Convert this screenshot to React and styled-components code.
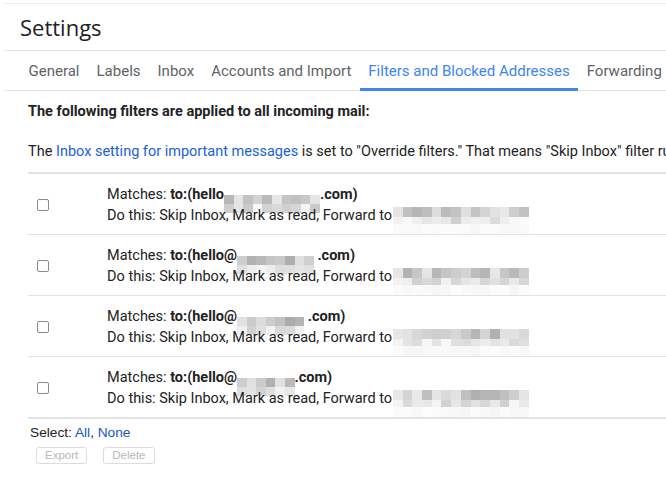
import React from 'react'
import styled, { createGlobalStyle } from 'styled-components'

const GlobalStyle = createGlobalStyle`
	html, body {
		margin: 0;
		padding: 0;
		background: #fff;
		overflow: hidden;
	}
	body {
		font-family: Roboto, 'Liberation Sans', Arial, sans-serif;
		color: #222;
	}
`

const tabs = ['General', 'Labels', 'Inbox', 'Accounts and Import', 'Filters and Blocked Addresses', 'Forwarding']

// blurred bits of the addresses, cols / shades picked to look like the screenshot
const filters = [
	{ at: false, matchCols: 10, matchSeed: 3, fwdSeed: 11 },
	{ at: true, matchCols: 8, matchSeed: 7, fwdSeed: 17, gap: true },
	{ at: true, matchCols: 7, matchSeed: 5, fwdSeed: 23, gap: true },
	{ at: true, matchCols: 6, matchSeed: 13, fwdSeed: 29 },
]

// tiny seeded random so the mosaic stays the same on every render
function shades(seed, count, min, max) {
	let s = seed * 9301 + 49297
	const out = []
	for (let i = 0; i < count; i++) {
		s = (s * 9301 + 49297) % 233280
		const v = Math.round(min + (s / 233280) * (max - min))
		out.push(`rgb(${v},${v},${v})`)
	}
	return out
}

function Mosaic({ seed, cols, rows, cell = 10, min = 190, max = 245, className }) {
	return (
		<MosaicGrid className={className} $cols={cols} $cell={cell}>
			{rows.map((r, ri) =>
				shades(seed + ri * 31, cols, r.min ?? min, r.max ?? max).map((c, i) => (
					<MosaicCell key={ri + '-' + i} $h={r.h} style={{ background: c }} />
				))
			)}
		</MosaicGrid>
	)
}

export default function App() {
	return (
		<Page>
			<GlobalStyle />
			<Header>Settings</Header>

			<TabBar>
				{tabs.map(t => (
					<Tab key={t} $active={t === 'Filters and Blocked Addresses'}>{t}</Tab>
				))}
			</TabBar>

			<Content>
				<Heading>The following filters are applied to all incoming mail:</Heading>
				<Note>
					The <Link>Inbox setting for important messages</Link> is set to "Override filters." That means "Skip Inbox" filter rules will not apply.
				</Note>

				<FilterTable>
					{filters.map((f, i) => (
						<FilterRow key={i} $last={i === filters.length - 1}>
							<CheckCell>
								<Check />
							</CheckCell>
							<Details>
								<Line>
									Matches: <b>to:(hello{f.at ? '@' : ''}</b>
									<MatchMosaic
										seed={f.matchSeed}
										cols={f.matchCols}
										cell={9.6}
										rows={[{ h: 9, min: 170, max: 232 }, { h: 9, min: 200, max: 248 }]}
									/>
									<b>{f.gap ? ' ' : ''}.com)</b>
								</Line>
								<Line>
									Do this: Skip Inbox, Mark as read, Forward to
									<FwdMosaic
										seed={f.fwdSeed}
										cols={14}
										cell={9.7}
										rows={[{ h: 10, min: 175, max: 235 }, { h: 7, min: 205, max: 250 }, { h: 10, min: 246, max: 252 }]}
									/>
								</Line>
							</Details>
						</FilterRow>
					))}
				</FilterTable>

				<Select>
					Select: <SelLink>All</SelLink>, <SelLink>None</SelLink>
				</Select>
				<Buttons>
					<Button disabled>Export</Button>
					<Button disabled>Delete</Button>
				</Buttons>
			</Content>
		</Page>
	)
}

const Page = styled.div`
	margin: 3px 0 0 4px;
	border-top: 1px solid #ececec;
	width: 900px;
`

const Header = styled.div`
	height: 46px;
	display: flex;
	align-items: center;
	padding-left: 16px;
	font-family: 'Open Sans', Roboto, sans-serif;
	font-size: 22px;
	color: #202124;
	border-bottom: 1px solid #e5e5e5;
`

const TabBar = styled.div`
	display: flex;
	height: 39px;
	padding-left: 16px;
	border-bottom: 1px solid #e5e5e5;
	white-space: nowrap;
`

const Tab = styled.div`
	display: flex;
	align-items: center;
	padding: 2px 8.5px 0;
	font-size: 15px;
	color: ${p => (p.$active ? '#3d85f0' : '#5f6368')};
	border-bottom: 3px solid ${p => (p.$active ? '#4285f4' : 'transparent')};
	margin-bottom: -1px;
`

const Content = styled.div`
	padding-left: 24px;
`

const Heading = styled.div`
	margin-top: 13px;
	font-size: 14.5px;
	font-weight: bold;
	line-height: 16px;
	color: #222;
`

const Note = styled.div`
	margin-top: 24px;
	font-size: 14.5px;
	line-height: 16px;
	white-space: nowrap;
	color: #222;
`

const Link = styled.span`
	color: #1a5fd6;
`

const FilterTable = styled.div`
	margin-top: 12px;
	border-top: 2px solid #e3e3e3;
`

const FilterRow = styled.div`
	display: flex;
	align-items: center;
	height: 60px;
	border-bottom: ${p => (p.$last ? '2px' : '1px')} solid #e3e3e3;
`

const CheckCell = styled.div`
	width: 79px;
	display: flex;
	padding-left: 9px;
	box-sizing: border-box;
	padding-top: 2px;
`

const Check = styled.span`
	width: 10px;
	height: 10px;
	border: 1px solid #8a8a8a;
	border-radius: 2px;
	background: #fff;
`

const Details = styled.div`
	display: flex;
	flex-direction: column;
	padding-top: 1px;
`

const Line = styled.div`
	font-size: 14.5px;
	line-height: 21px;
	height: 21px;
	color: #222;
	white-space: nowrap;

	b {
		font-weight: bold;
		white-space: pre;
	}
`

const MosaicGrid = styled.span`
	display: inline-grid;
	grid-template-columns: repeat(${p => p.$cols}, ${p => p.$cell}px);
`

const MosaicCell = styled.span`
	height: ${p => p.$h}px;
`

const MatchMosaic = styled(Mosaic)`
	vertical-align: -5px;
`

const FwdMosaic = styled(Mosaic)`
	vertical-align: top;
	margin-top: 2px;
	margin-left: 1px;
`

const Select = styled.div`
	margin: 6px 0 0 2px;
	font-family: 'Liberation Sans', Arial, sans-serif;
	font-size: 13.7px;
	line-height: 16px;
	color: #222;
`

const SelLink = styled.span`
	color: #1155cc;
`

const Buttons = styled.div`
	display: flex;
	gap: 16px;
	margin: 6px 0 0 8px;
`

const Button = styled.button`
	font-family: 'Liberation Sans', Arial, sans-serif;
	font-size: 11.5px;
	color: #b8b8b8;
	background: #fff;
	border: 1px solid #dcdcdc;
	border-radius: 3px;
	height: 17px;
	padding: 0 8px;
	line-height: 15px;
`
